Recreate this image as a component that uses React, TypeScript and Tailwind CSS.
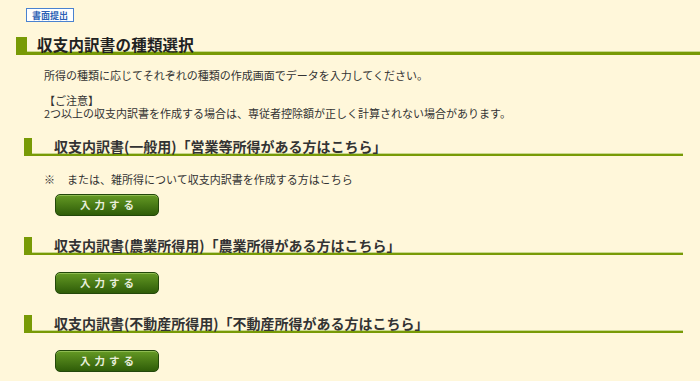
export default function App() {
  const sections = [
    { title: "収支内訳書(一般用)「営業等所得がある方はこちら」", note: "または、雑所得について収支内訳書を作成する方はこちら" },
    { title: "収支内訳書(農業所得用)「農業所得がある方はこちら」" },
    { title: "収支内訳書(不動産所得用)「不動産所得がある方はこちら」" },
  ];

  return (
    <div
      className="min-h-screen bg-[#fff7da] pb-4 text-[#222]"
      style={{ fontFamily: '"Noto Sans CJK JP", "Noto Sans", sans-serif' }}
    >
      {/* badge */}
      <div className="pt-[8px] pl-[26px]">
        <span className="flex h-[14px] w-[48px] items-center justify-center border border-[#4a82d0] bg-white text-[9px] font-bold leading-none text-[#2b5fb5]">
          書面提出
        </span>
      </div>

      {/* main heading */}
      <div className="mt-[15px] ml-[16px] flex h-[18px] items-center border-b-[3px] border-l-[11px] border-[#789a06] pl-[10px] shadow-[inset_0_-1px_0_#c9d88e]">
        <h1 className="text-[15.5px] font-bold leading-none tracking-[0.2px]">収支内訳書の種類選択</h1>
      </div>

      {/* description */}
      <div className="pl-[44px] text-[11px] leading-[13px] text-[#333]">
        <p className="mt-[14px]">所得の種類に応じてそれぞれの種類の作成画面でデータを入力してください。</p>
        <p className="mt-[12px]">【ご注意】</p>
        <p>2つ以上の収支内訳書を作成する場合は、専従者控除額が正しく計算されない場合があります。</p>
      </div>

      {sections.map((s, i) => (
        <div key={i} className={i === 0 ? "mt-[18px]" : "mt-[21px]"}>
          <div className="ml-[24px] mr-[17px] flex h-[18px] items-center border-b-[2px] border-l-[8px] border-[#789a06] pl-[22px] shadow-[inset_0_-1px_0_#c9d88e]">
            <h2 className="text-[14px] font-bold leading-none text-[#333]">{s.title}</h2>
          </div>
          {s.note ? (
            <div className="mt-[17px] flex pl-[44px] text-[11px] leading-[13px] text-[#333]">
              <span className="w-[23px]">※</span>
              <span>{s.note}</span>
            </div>
          ) : null}
          <button
            className={
              (s.note ? "mt-[8px]" : "mt-[17px]") +
              " ml-[55px] flex h-[22px] w-[104px] items-center justify-center rounded-[5px] border border-[#23480a] bg-gradient-to-b from-[#659a24] to-[#2f5d08] text-[10.5px] font-bold tracking-[4px] text-[#e8eedc] shadow-[inset_0_1px_0_#8fbb52]"
            }
          >
            <span className="pl-[4px]">入力する</span>
          </button>
        </div>
      ))}
    </div>
  );
}
